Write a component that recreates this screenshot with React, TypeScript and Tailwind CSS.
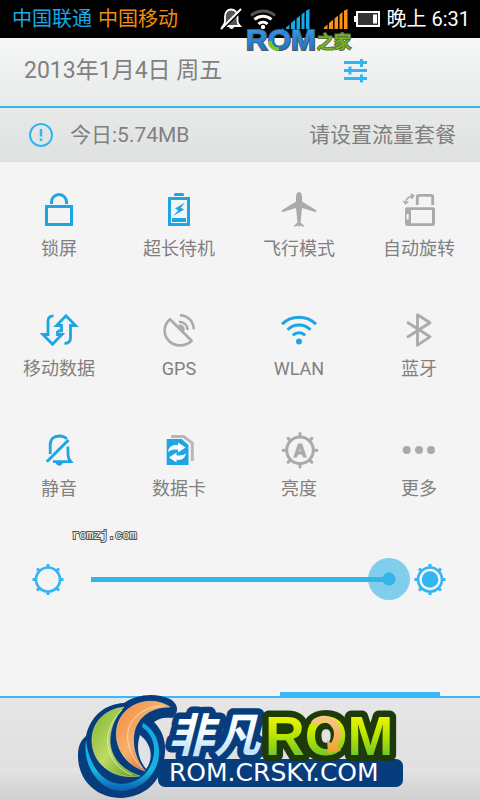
import { useState } from 'react';
import type { ReactNode } from 'react';

const TICKS = [0, 45, 90, 135, 180, 225, 270, 315];

function LockIcon() {
  return (
    <svg className="w-10 h-10" viewBox="0 0 40 40" fill="none" stroke="currentColor" strokeWidth={3} aria-hidden="true">
      <rect x="6.5" y="16.5" width="25" height="18" />
      <path d="M11.5 14v-2a7.5 7.5 0 0 1 15 0v2" />
    </svg>
  );
}

function BatteryIcon() {
  return (
    <svg className="w-10 h-10" viewBox="0 0 40 40" fill="currentColor" aria-hidden="true">
      <path d="M14 6V4.500q0-1.500 1.500-1.500h7q1.500 0 1.500 1.500V6z" />
      <rect x="9.500" y="8.500" width="19" height="26" fill="none" stroke="currentColor" strokeWidth={3} />
      <path d="M25 12.500L15 18.500l3.200 2-5 5.500 11-6.500-3.400-1.800zM12 28h14v4H12z" />
    </svg>
  );
}

function PlaneIcon() {
  return (
    <svg className="w-10 h-10" viewBox="0 0 40 40" fill="currentColor" aria-hidden="true">
      <path d="M19 2c-2 0-3 2.500-3 5v4.500L3 19.500c-1 .7-1.300 1.500-1 2.800l14-4.300 1.500 14.500-3 2.800c-.5.500-.5 1.200-.2 1.700l3.700-1.500 1 1.800 1-1.800 3.700 1.500c.3-.5.3-1.200-.2-1.700l-3-2.800L22 18l14 4.300c.3-1.300 0-2.100-1-2.800l-13-8V7c0-2.500-1-5-3-5z" />
    </svg>
  );
}

function RotateIcon() {
  return (
    <svg className="w-10 h-10" viewBox="0 0 40 40" fill="none" stroke="currentColor" aria-hidden="true">
      <path d="M17.300 15V7q0-1.700 1.700-1.700h12q1.700 0 1.700 1.700v8" strokeWidth={2.800} />
      <path d="M7 17.300h26q2 0 2 2V34q0 2-2 2H7q-2 0-2-2V19.300q0-2 2-2zM11 20v13.300h21V20zM6.500 24v5.500h2.200V24z" fill="currentColor" fillRule="evenodd" stroke="none" />
      <path d="M5.500 13C6 9 8.500 6.500 13 6M3.200 10.800l2.200 3 3-2.200M10.800 3.800l3 2-2.200 3" strokeWidth={1.400} />
    </svg>
  );
}

function MobileDataIcon() {
  return (
    <svg className="w-10 h-10" viewBox="0 0 40 40" fill="none" stroke="currentColor" strokeWidth={2.800} aria-hidden="true">
      <path d="M13.500 5.800C9.500 6 8 8 8 11v13.500H3l9.500 9.700 9.500-9.700h-4.500V21" />
      <path d="M24.500 33.500c4-.2 6-2.200 6-5.200V15.500h5L26 5.800l-9.500 9.700h5v5.300h-4" />
    </svg>
  );
}

function GpsIcon() {
  return (
    <svg className="w-10 h-10" viewBox="0 0 40 40" fill="none" stroke="currentColor" strokeWidth={2.600} strokeLinejoin="round" aria-hidden="true">
      <path d="M10 9.300l21.700 21.400C25 37 14.500 37 8.500 30.500 2.800 24 3.500 14.800 10 9.300z" />
      <path d="M19 11.700c5 .2 8.500 3.500 8.700 8.300M20 5.200c8 .3 13.500 6 13.700 14" />
      <path d="M17 16.200a4 4 0 0 1 6 6z" fill="currentColor" strokeWidth={1} />
    </svg>
  );
}

function WlanIcon() {
  return (
    <svg className="w-10 h-10" viewBox="0 0 40 40" fill="none" stroke="currentColor" strokeWidth={3} aria-hidden="true">
      <path d="M2 14.200c9.500-9.200 24.500-9.200 34 0M7.500 19.800c6.500-6.400 16.500-6.400 23 0M12.800 25.300c3.600-3.500 8.800-3.500 12.400 0" />
      <circle cx="19" cy="31.500" r="3" fill="currentColor" stroke="none" />
    </svg>
  );
}

function BluetoothIcon() {
  return (
    <svg className="w-10 h-10" viewBox="0 0 40 40" fill="none" stroke="currentColor" strokeWidth={2.800} strokeLinecap="round" strokeLinejoin="round" aria-hidden="true">
      <path d="M8 12.800l22 14-12.500 8.400V4.800L30 12.800 8 26.800" />
    </svg>
  );
}

function MuteIcon() {
  return (
    <svg className="w-10 h-10" viewBox="0 0 40 40" fill="none" stroke="currentColor" strokeWidth={2.800} aria-hidden="true">
      <path d="M10.200 24V14.500c0-5.500 3.500-8.500 9-8.500 3.600 0 6 1 7.500 3M28 16.500v8c0 3 1 5 2.800 7.200H13" />
      <path d="M6.800 31.700L28.500 10" strokeWidth={3} />
      <path d="M15.500 32.500h7.500c-.6 2-1.800 3.200-3.700 3.200s-3.200-1.200-3.800-3.200z" fill="currentColor" stroke="none" />
    </svg>
  );
}

function DataCardIcon() {
  return (
    <svg className="w-10 h-10" viewBox="0 0 40 40" aria-hidden="true">
      <path d="M11 6.500h12.500l8.800 6.500v18" fill="none" stroke="#b8b8b8" strokeWidth={3} />
      <path d="M6.700 9h15l6.800 6v20H6.700z" fill="currentColor" />
      <path d="M8 22c.7-5 4.500-7.700 10-6.800v-2.700l7.500 5-7.500 5v-2.800c-4.500-.7-7.500 0-10 2.300z" fill="#fff" />
      <path d="M26 23c-.7 5-4 7.500-9.500 6.800v2.700L9 27.500l7.500-5v2.800c4.500.5 7.200 0 9.500-2.300z" fill="#fff" />
    </svg>
  );
}

function AutoBrightnessIcon() {
  return (
    <svg className="w-10 h-10" viewBox="0 0 40 40" aria-hidden="true">
      <circle cx="20" cy="20.300" r="13.300" fill="none" stroke="currentColor" strokeWidth={3} />
      {TICKS.map((angle) => (
        <path key={angle} d="M20 6.500V3.500" stroke="currentColor" strokeWidth={3} strokeLinecap="round" transform={`rotate(${angle} 20 20.300)`} />
      ))}
      <text x="20" y="26.500" textAnchor="middle" className="font-['Liberation_Sans',sans-serif] text-[18px] font-bold" fill="currentColor" stroke="currentColor" strokeWidth={1}>A</text>
    </svg>
  );
}

function MoreIcon() {
  return (
    <svg className="w-10 h-10" viewBox="0 0 40 40" fill="currentColor" aria-hidden="true">
      <circle cx="6.700" cy="20" r="4" />
      <circle cx="19" cy="20" r="4" />
      <circle cx="31" cy="20" r="4" />
    </svg>
  );
}

function SunIcon({ filled }: { filled?: boolean }) {
  return (
    <svg className="w-8 h-8 flex-shrink-0 text-[#33b5f5]" viewBox="0 0 32 32" aria-hidden="true">
      <circle cx="16" cy="16.500" r="12" fill="none" stroke="currentColor" strokeWidth={2.600} />
      {TICKS.map((angle) => (
        <path key={angle} d="M16 4.500V1" stroke="currentColor" strokeWidth={3} transform={`rotate(${angle} 16 16.500)`} />
      ))}
      {filled && <circle cx="16" cy="16.500" r="8.300" fill="currentColor" />}
    </svg>
  );
}

interface Tile {
  label: string;
  icon: ReactNode;
  active: boolean;
}

const TILES: Tile[] = [
  { label: '锁屏', icon: <LockIcon />, active: true },
  { label: '超长待机', icon: <BatteryIcon />, active: true },
  { label: '飞行模式', icon: <PlaneIcon />, active: false },
  { label: '自动旋转', icon: <RotateIcon />, active: false },
  { label: '移动数据', icon: <MobileDataIcon />, active: true },
  { label: 'GPS', icon: <GpsIcon />, active: false },
  { label: 'WLAN', icon: <WlanIcon />, active: true },
  { label: '蓝牙', icon: <BluetoothIcon />, active: false },
  { label: '静音', icon: <MuteIcon />, active: true },
  { label: '数据卡', icon: <DataCardIcon />, active: true },
  { label: '亮度', icon: <AutoBrightnessIcon />, active: false },
  { label: '更多', icon: <MoreIcon />, active: false },
];

function SignalIcon() {
  return (
    <svg className="w-6 h-5" viewBox="0 0 24 20" fill="currentColor" aria-hidden="true">
      <path d="M0 20v-1.500L3.500 15.500V20zM5 20v-6l4-3.200V20zM10.500 20V9.500l3.500-3V20zM15.500 20V5.500L18.500 3v17zM20 20V1.800L23.500 0v20z" />
    </svg>
  );
}

function StatusBar() {
  return (
    <header className="flex items-center h-[38px] pl-3 pr-2.5 bg-black text-xl leading-6 whitespace-nowrap">
      <span className="text-[#19a9e5]">中国联通</span>
      <span className="ml-1.5 text-[#f08c10]">中国移动</span>
      <div className="flex items-center ml-auto text-white">
        <svg className="w-[22px] h-[22px]" viewBox="0 0 22 22" fill="none" aria-hidden="true">
          <path d="M5 13V8.500C5 4 7.500 1.500 11 1.500S17.500 4 17.500 8.500V13c0 2 1 3.500 2.500 5H3c1.200-1.500 2-3 2-5z" fill="#555" stroke="#fff" strokeWidth={1.800} />
          <path d="M9 19h5q-.5 2-2.500 2T9 19z" fill="#fff" />
          <path d="M2 22L22 2" stroke="#000" strokeWidth={2} />
          <path d="M1 21L21 1" stroke="#fff" strokeWidth={2} />
        </svg>
        <svg className="ml-2 w-[26px] h-5" viewBox="0 0 26 20" fill="none" strokeWidth={3} aria-hidden="true">
          <path d="M1 6.500c7-6 17-6 24 0" stroke="#555" />
          <path d="M4.500 10.500c5-4.500 12-4.500 17 0M8.500 15c2.600-2.500 6.400-2.500 9 0" stroke="#fff" />
          <circle cx="13" cy="18" r="2.200" fill="#fff" />
        </svg>
        <span className="ml-2.5 text-[#19a9e5]"><SignalIcon /></span>
        <span className="ml-3.5 text-[#ff9212]"><SignalIcon /></span>
        <svg className="ml-1.5 w-[26px] h-4" viewBox="0 0 26 16" aria-hidden="true">
          <path d="M0 5h3v6H0z" fill="#fff" />
          <rect x="3" y="1" width="22" height="14" fill="#333" stroke="#fff" strokeWidth={2} />
          <path d="M19 3.500h4v9h-4z" fill="#fff" />
        </svg>
        <span className="ml-1.5">晚上 6:31</span>
      </div>
    </header>
  );
}

// Site badge that overlaps the status bar and the date header
function HeaderBadge() {
  return (
    <svg className="absolute left-[244px] top-5 w-[110px] h-10" viewBox="0 0 110 40">
      <defs>
        <linearGradient id="badgeBlue" x1="0" y1="0" x2="0" y2="1">
          <stop offset="0" stopColor="#3ba4ee" />
          <stop offset="1" stopColor="#1768bd" />
        </linearGradient>
      </defs>
      <text x="2" y="30" className="font-['Liberation_Sans',sans-serif] text-[30px] font-bold" fill="url(#badgeBlue)" stroke="#4a5a66" strokeWidth={2} paintOrder="stroke">ROM</text>
      <path d="M26 21c0 5 4 8.500 9 8" fill="none" stroke="#79c925" strokeWidth={3.500} />
      <path d="M38 8l6 5-7 2.500z" fill="#2385d8" />
      <text x="73" y="28" className="font-['Noto_Sans_CJK_SC',sans-serif] text-[17px] font-medium" fill="#75b81d" stroke="#5c7040" strokeWidth={2} paintOrder="stroke">之家</text>
    </svg>
  );
}

function FooterLogo() {
  return (
    <svg className="absolute left-[78px] -top-2 w-[330px] h-[110px]" viewBox="0 0 330 110">
      <defs>
        <linearGradient id="orangeFill" x1="0" y1="0" x2="1" y2="1">
          <stop offset="0" stopColor="#f08a3c" />
          <stop offset="0.450" stopColor="#f7b06c" />
          <stop offset="1" stopColor="#d94b12" />
        </linearGradient>
        <linearGradient id="greenFill" x1="0" y1="0" x2="1" y2="1">
          <stop offset="0" stopColor="#7fb32a" />
          <stop offset="0.500" stopColor="#bcdb66" />
          <stop offset="1" stopColor="#5d9a12" />
        </linearGradient>
        <linearGradient id="cyanFill" x1="0" y1="0" x2="0" y2="1">
          <stop offset="0" stopColor="#10a8e2" />
          <stop offset="0.700" stopColor="#16b4e0" />
          <stop offset="1" stopColor="#0b5eb0" />
        </linearGradient>
        <linearGradient id="limeFill" x1="0" y1="0" x2="0" y2="1">
          <stop offset="0.200" stopColor="#eaf500" />
          <stop offset="0.500" stopColor="#b5e400" />
          <stop offset="0.850" stopColor="#6cc32c" />
        </linearGradient>
        <linearGradient id="iceFill" x1="0" y1="0" x2="0" y2="1">
          <stop offset="0.400" stopColor="#ffffff" />
          <stop offset="0.800" stopColor="#c3e3f8" />
        </linearGradient>
        <linearGradient id="arrowFill" x1="0" y1="0" x2="0" y2="1">
          <stop offset="0" stopColor="#f6c98c" />
          <stop offset="1" stopColor="#eda42a" />
        </linearGradient>
      </defs>

      <path d="M8 46C12 27 26 14 46 13 58 5 76 2 92 9c9 5 9 14 2 19-7-1-13 0-18 4 10 10 14 24 9 42-4 20-20 33-42 34C18 108 0 90 0 66c0-9 2-15 8-20z" fill="#073d7c" />
      <path d="M62 45c-4 12-2 24 6 34 7-9 7-24-6-34z" fill="#dfe3e8" />
      <path d="M8 50C4 74 20 100 43 101c24-1 40-22 38-42-1-12-7-21-16-26l-1 4c9 6 13 16 12 26-2 18-14 30-32 31C25 94 11 76 8 50z" fill="url(#cyanFill)" />
      <path d="M46 17C24 20 13 35 14 53c2 22 21 37 48 33-18-6-29-18-30-34 0-14 5-25 14-35z" fill="url(#greenFill)" stroke="#d2e69a" strokeWidth={0.500} />
      <path d="M44 20C33 31 28 43 30 56c2 13 11 24 24 29" fill="none" stroke="#e4f0bd" strokeWidth={0.800} />
      <path d="M92 17C80 9 63 9 50 19 39 28 36 42 40 55c4 13 14 22 27 26-9-11-13-24-11-37 2-14 14-27 36-27z" fill="url(#orangeFill)" stroke="#fbd9ac" strokeWidth={0.500} />
      <path d="M86 16C67 16 53 27 50 41c-2 14 4 27 14 37" fill="none" stroke="#fce1bd" strokeWidth={0.800} />

      <text x="90" y="62" className="font-['Noto_Sans_CJK_SC',sans-serif] text-[46px] font-bold italic" fill="url(#iceFill)" stroke="#073d7c" strokeWidth={13} strokeLinejoin="round" paintOrder="stroke">非凡</text>
      <rect x="80" y="69" width="245" height="28" rx="7" fill="#073d7c" />
      <text x="187" y="65" className="font-['Liberation_Sans',sans-serif] text-[55px] font-bold" fill="url(#limeFill)" stroke="#1d3a0a" strokeWidth={13} strokeLinejoin="round" paintOrder="stroke">ROM</text>
      <path d="M233 32c5-7 18-9 25-1 7 7 7 18 1 25l4 5-13 2-1-13 4 3c4-6 4-13 0-17-4-5-11-5-15 0z" fill="url(#arrowFill)" />
      <rect x="84" y="71" width="238" height="24" rx="5" fill="#073d7c" />
      <text x="91" y="91" className="font-['DejaVu_Sans',sans-serif] text-[25px]" fill="#fff">ROM.CRSKY.COM</text>
    </svg>
  );
}

export default function App() {
  const [brightness, setBrightness] = useState(100);

  return (
    <div className="relative flex flex-col min-h-screen overflow-hidden bg-[#f4f4f4] text-[#808080] font-['Roboto','Noto_Sans_CJK_SC',sans-serif]">
      <StatusBar />

      <div className="flex items-center justify-between h-[70px] pl-6 pr-[112px] pb-0.5 bg-linear-to-b from-[#f6f8f8] to-[#e8eaea] border-b-2 border-[#33b5e5]">
        <h1 className="text-[23px] leading-8">2013年1月4日 周五</h1>
        <button type="button" aria-label="设置">
          <svg className="w-6 h-6 text-[#33b5f5]" viewBox="0 0 24 24" fill="none" stroke="currentColor" strokeWidth={3} aria-hidden="true">
            <path d="M0 3.500h23M0 11.500h23M0 19.500h23" />
            <path d="M17.500 0v8M6 7.500v8M17.500 15.500v8" />
          </svg>
        </button>
      </div>

      <div className="flex items-center h-[54px] pl-7 pr-6 bg-linear-to-b from-[#e8eaea] to-[#dfe1e1] text-[21px] leading-8">
        <svg className="w-[26px] h-[26px] text-[#33b5f5]" viewBox="0 0 26 26" fill="none" stroke="currentColor" aria-hidden="true">
          <circle cx="13" cy="13" r="11" strokeWidth={2} />
          <path d="M13 7v7.500M13 16.500v2.500" strokeWidth={2.500} />
        </svg>
        <span className="ml-4">今日:5.74MB</span>
        <span className="ml-auto">请设置流量套餐</span>
      </div>

      <main className="flex flex-col flex-1">
        <div className="grid grid-cols-4">
          {TILES.map(({ label, icon, active }) => (
            <button key={label} type="button" aria-pressed={active} className="flex flex-col items-center gap-[7px] h-[120px] pt-7">
              <span className={active ? 'text-[#1ea5e4]' : 'text-[#aaaaaa]'}>{icon}</span>
              <span className="pr-0.5 text-lg leading-6">{label}</span>
            </button>
          ))}
        </div>

        <p className="h-9 pl-[72px] pt-1.5 font-['Liberation_Mono',monospace] text-xs leading-4 text-white [-webkit-text-stroke:2px_#555] [paint-order:stroke]">
          romzj.com
        </p>

        <div className="flex items-center pl-8 pr-[34px]">
          <SunIcon />
          <input
            type="range"
            min={0}
            max={100}
            value={brightness}
            onChange={(e) => setBrightness(Number(e.target.value))}
            aria-label="亮度调节"
            className="flex-1 min-w-0 h-[42px] ml-1.5 mr-1 appearance-none bg-transparent bg-[linear-gradient(#33b5e5,#33b5e5)] bg-no-repeat bg-center bg-[length:calc(100%-42px)_5px] [&::-webkit-slider-thumb]:appearance-none [&::-webkit-slider-thumb]:w-[42px] [&::-webkit-slider-thumb]:h-[42px] [&::-webkit-slider-thumb]:rounded-full [&::-webkit-slider-thumb]:bg-[radial-gradient(circle,#33b5e5_6px,#33b5e599_7px)]"
          />
          <SunIcon filled />
        </div>

        <div className="self-end w-40 h-1 mt-auto mr-10 bg-[#3bb8f5]" />
      </main>

      <footer className="relative border-t-2 border-[#3bb8f5]">
        <div className="h-[70px] bg-linear-to-b from-[#e6e6e6] to-[#e0e0e0]" />
        <div className="h-8 bg-linear-to-b from-[#e4e4e4] to-[#cfcfcf]" />
        <FooterLogo />
      </footer>

      <HeaderBadge />
    </div>
  );
}
